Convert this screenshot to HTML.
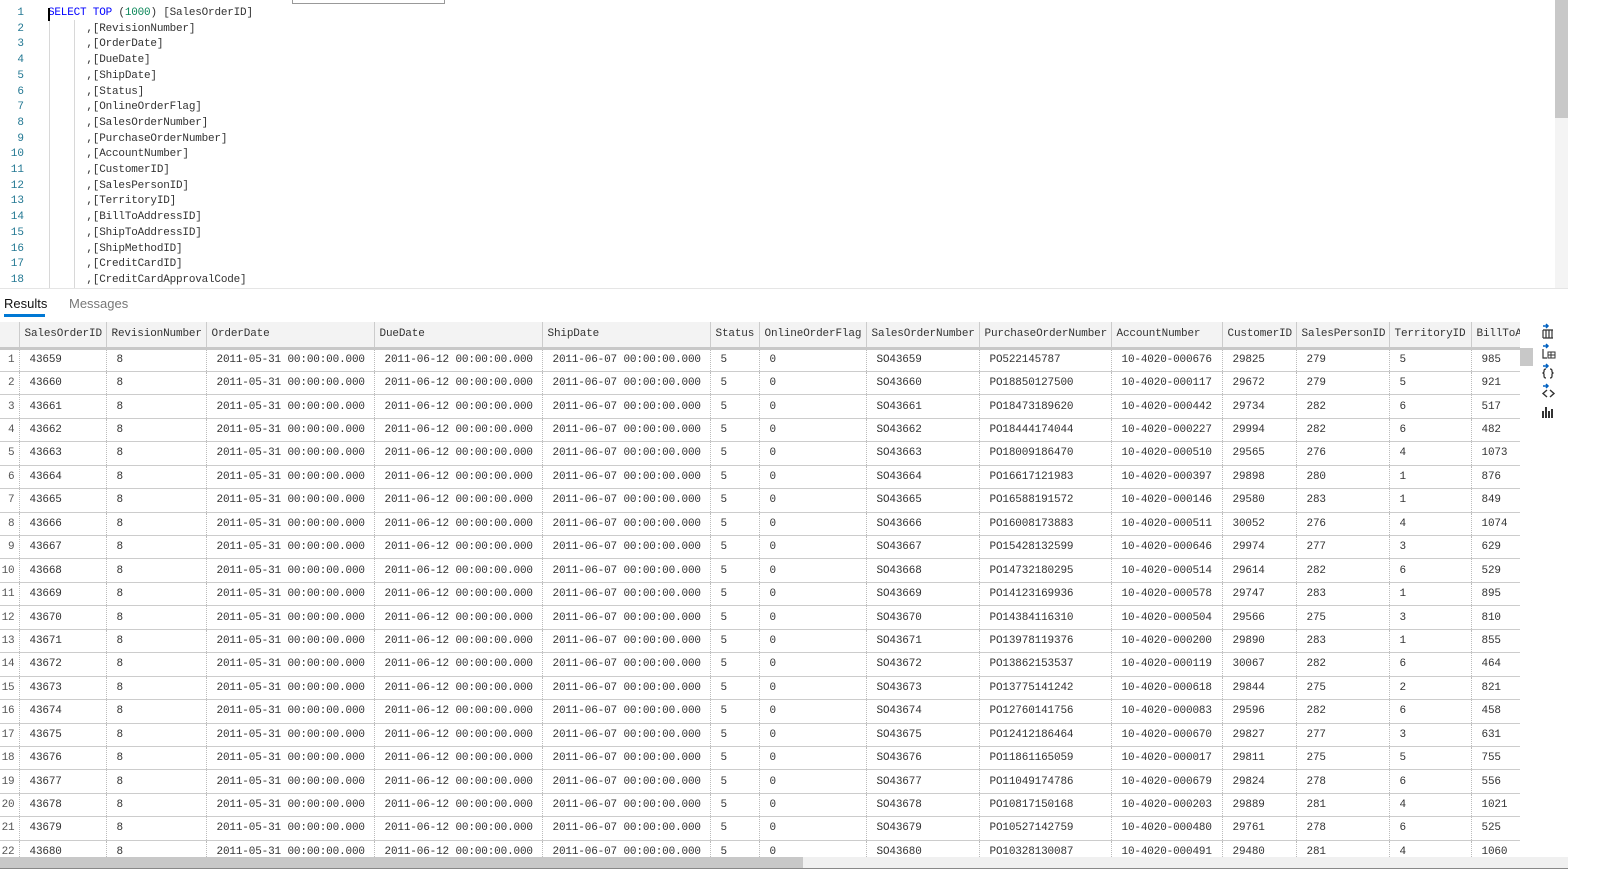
<!DOCTYPE html>
<html><head><meta charset="utf-8"><style>
*{margin:0;padding:0;box-sizing:border-box}
body{width:1602px;height:891px;background:#fff;overflow:hidden;position:relative;font-family:"Liberation Mono",monospace;}
.ed{position:absolute;left:0;top:0;width:1555px;height:288px;overflow:hidden}
.ln{position:absolute;left:0;width:24px;text-align:right;color:#237893;font-size:11px}
.cd{position:absolute;left:48px;font-size:11px;color:#333;white-space:pre;letter-spacing:-0.2px}
.kw{color:#0000ff}.nm{color:#098658}
.g1{position:absolute;left:49px;top:20px;width:1px;height:268px;background:#d8d8d8}
.g2{position:absolute;left:74px;top:20px;width:1px;height:268px;background:#d8d8d8}
.find{position:absolute;left:292px;top:-2px;width:153px;height:6px;border:1px solid #999;border-top:none;background:#fff}
.vs{position:absolute;left:1555px;top:0;width:13px;height:288px;background:#f4f4f4}
.vs i{position:absolute;left:0;top:0;width:13px;height:118px;background:#c8c8c8}
.div{position:absolute;left:0;top:288px;width:1568px;height:1px;background:#e5e5e5}
.tab{position:absolute;top:296px;font-family:"Liberation Sans",sans-serif;font-size:13px}
.ul{position:absolute;left:4px;top:314px;width:41px;height:3px;background:#0078d4}
table{position:absolute;left:0;top:0;width:1531px;border-collapse:collapse;table-layout:fixed;font-size:11px;color:#333;letter-spacing:-0.15px}
th{height:26px;background:#f3f3f3;font-weight:normal;text-align:left;padding-left:5px;border-right:1px solid #ccc;border-bottom:3px solid #c8c8c8;white-space:nowrap;overflow:hidden}
td{height:23.45px;padding-left:10px;border-right:1px dotted #bbb;border-bottom:1px solid #ccc;white-space:nowrap;overflow:hidden}
td.r{padding-left:0;text-align:right;padding-right:4px;color:#555;direction:rtl}
.tw{position:absolute;left:0;top:322px;width:1520px;height:535px;overflow:hidden}
.hs{position:absolute;left:0;top:857px;width:1568px;height:11px;background:#f0f0f0}
.hs i{position:absolute;left:0;top:0;width:803px;height:11px;background:#c8c8c8}
.bl{position:absolute;left:0;top:868px;width:1568px;height:1px;background:#888}
.rvs{position:absolute;left:1520px;top:348px;width:13px;height:18px;background:#c8c8c8}
.ico{position:absolute;left:1540px;width:16px;height:16px}
</style></head><body>
<div class="ed">
<div class="g1"></div><div class="g2"></div>
<div class="ln" style="top:7px">1</div><div class="cd" style="top:7px"><span class="kw">SELECT TOP</span> (<span class="nm">1000</span>) [SalesOrderID]</div>
<div class="ln" style="top:22.7px">2</div><div class="cd" style="top:22.7px">      ,[RevisionNumber]</div>
<div class="ln" style="top:38.4px">3</div><div class="cd" style="top:38.4px">      ,[OrderDate]</div>
<div class="ln" style="top:54.1px">4</div><div class="cd" style="top:54.1px">      ,[DueDate]</div>
<div class="ln" style="top:69.8px">5</div><div class="cd" style="top:69.8px">      ,[ShipDate]</div>
<div class="ln" style="top:85.5px">6</div><div class="cd" style="top:85.5px">      ,[Status]</div>
<div class="ln" style="top:101.2px">7</div><div class="cd" style="top:101.2px">      ,[OnlineOrderFlag]</div>
<div class="ln" style="top:116.9px">8</div><div class="cd" style="top:116.9px">      ,[SalesOrderNumber]</div>
<div class="ln" style="top:132.6px">9</div><div class="cd" style="top:132.6px">      ,[PurchaseOrderNumber]</div>
<div class="ln" style="top:148.3px">10</div><div class="cd" style="top:148.3px">      ,[AccountNumber]</div>
<div class="ln" style="top:164px">11</div><div class="cd" style="top:164px">      ,[CustomerID]</div>
<div class="ln" style="top:179.7px">12</div><div class="cd" style="top:179.7px">      ,[SalesPersonID]</div>
<div class="ln" style="top:195.4px">13</div><div class="cd" style="top:195.4px">      ,[TerritoryID]</div>
<div class="ln" style="top:211.1px">14</div><div class="cd" style="top:211.1px">      ,[BillToAddressID]</div>
<div class="ln" style="top:226.8px">15</div><div class="cd" style="top:226.8px">      ,[ShipToAddressID]</div>
<div class="ln" style="top:242.5px">16</div><div class="cd" style="top:242.5px">      ,[ShipMethodID]</div>
<div class="ln" style="top:258.2px">17</div><div class="cd" style="top:258.2px">      ,[CreditCardID]</div>
<div class="ln" style="top:273.9px">18</div><div class="cd" style="top:273.9px">      ,[CreditCardApprovalCode]</div>
<div style="position:absolute;left:48px;top:8px;width:2px;height:13px;background:#000"></div>
</div>
<div class="find"></div>
<div class="vs"><i></i></div>
<div class="div"></div>
<div class="tab" style="left:4px;color:#111">Results</div>
<div class="tab" style="left:69px;color:#777">Messages</div>
<div class="ul"></div>
<div class="tw"><table>
<colgroup><col style="width:19px"><col style="width:87px"><col style="width:100px"><col style="width:168px"><col style="width:168px"><col style="width:168px"><col style="width:49px"><col style="width:107px"><col style="width:113px"><col style="width:132px"><col style="width:111px"><col style="width:74px"><col style="width:93px"><col style="width:82px"><col style="width:60px"></colgroup>
<tr><th></th><th>SalesOrderID</th><th>RevisionNumber</th><th>OrderDate</th><th>DueDate</th><th>ShipDate</th><th>Status</th><th>OnlineOrderFlag</th><th>SalesOrderNumber</th><th>PurchaseOrderNumber</th><th>AccountNumber</th><th>CustomerID</th><th>SalesPersonID</th><th>TerritoryID</th><th>BillToAddressID</th></tr>
<tr><td class="r">1</td><td>43659</td><td>8</td><td>2011-05-31 00:00:00.000</td><td>2011-06-12 00:00:00.000</td><td>2011-06-07 00:00:00.000</td><td>5</td><td>0</td><td>SO43659</td><td>PO522145787</td><td>10-4020-000676</td><td>29825</td><td>279</td><td>5</td><td>985</td></tr>
<tr><td class="r">2</td><td>43660</td><td>8</td><td>2011-05-31 00:00:00.000</td><td>2011-06-12 00:00:00.000</td><td>2011-06-07 00:00:00.000</td><td>5</td><td>0</td><td>SO43660</td><td>PO18850127500</td><td>10-4020-000117</td><td>29672</td><td>279</td><td>5</td><td>921</td></tr>
<tr><td class="r">3</td><td>43661</td><td>8</td><td>2011-05-31 00:00:00.000</td><td>2011-06-12 00:00:00.000</td><td>2011-06-07 00:00:00.000</td><td>5</td><td>0</td><td>SO43661</td><td>PO18473189620</td><td>10-4020-000442</td><td>29734</td><td>282</td><td>6</td><td>517</td></tr>
<tr><td class="r">4</td><td>43662</td><td>8</td><td>2011-05-31 00:00:00.000</td><td>2011-06-12 00:00:00.000</td><td>2011-06-07 00:00:00.000</td><td>5</td><td>0</td><td>SO43662</td><td>PO18444174044</td><td>10-4020-000227</td><td>29994</td><td>282</td><td>6</td><td>482</td></tr>
<tr><td class="r">5</td><td>43663</td><td>8</td><td>2011-05-31 00:00:00.000</td><td>2011-06-12 00:00:00.000</td><td>2011-06-07 00:00:00.000</td><td>5</td><td>0</td><td>SO43663</td><td>PO18009186470</td><td>10-4020-000510</td><td>29565</td><td>276</td><td>4</td><td>1073</td></tr>
<tr><td class="r">6</td><td>43664</td><td>8</td><td>2011-05-31 00:00:00.000</td><td>2011-06-12 00:00:00.000</td><td>2011-06-07 00:00:00.000</td><td>5</td><td>0</td><td>SO43664</td><td>PO16617121983</td><td>10-4020-000397</td><td>29898</td><td>280</td><td>1</td><td>876</td></tr>
<tr><td class="r">7</td><td>43665</td><td>8</td><td>2011-05-31 00:00:00.000</td><td>2011-06-12 00:00:00.000</td><td>2011-06-07 00:00:00.000</td><td>5</td><td>0</td><td>SO43665</td><td>PO16588191572</td><td>10-4020-000146</td><td>29580</td><td>283</td><td>1</td><td>849</td></tr>
<tr><td class="r">8</td><td>43666</td><td>8</td><td>2011-05-31 00:00:00.000</td><td>2011-06-12 00:00:00.000</td><td>2011-06-07 00:00:00.000</td><td>5</td><td>0</td><td>SO43666</td><td>PO16008173883</td><td>10-4020-000511</td><td>30052</td><td>276</td><td>4</td><td>1074</td></tr>
<tr><td class="r">9</td><td>43667</td><td>8</td><td>2011-05-31 00:00:00.000</td><td>2011-06-12 00:00:00.000</td><td>2011-06-07 00:00:00.000</td><td>5</td><td>0</td><td>SO43667</td><td>PO15428132599</td><td>10-4020-000646</td><td>29974</td><td>277</td><td>3</td><td>629</td></tr>
<tr><td class="r">10</td><td>43668</td><td>8</td><td>2011-05-31 00:00:00.000</td><td>2011-06-12 00:00:00.000</td><td>2011-06-07 00:00:00.000</td><td>5</td><td>0</td><td>SO43668</td><td>PO14732180295</td><td>10-4020-000514</td><td>29614</td><td>282</td><td>6</td><td>529</td></tr>
<tr><td class="r">11</td><td>43669</td><td>8</td><td>2011-05-31 00:00:00.000</td><td>2011-06-12 00:00:00.000</td><td>2011-06-07 00:00:00.000</td><td>5</td><td>0</td><td>SO43669</td><td>PO14123169936</td><td>10-4020-000578</td><td>29747</td><td>283</td><td>1</td><td>895</td></tr>
<tr><td class="r">12</td><td>43670</td><td>8</td><td>2011-05-31 00:00:00.000</td><td>2011-06-12 00:00:00.000</td><td>2011-06-07 00:00:00.000</td><td>5</td><td>0</td><td>SO43670</td><td>PO14384116310</td><td>10-4020-000504</td><td>29566</td><td>275</td><td>3</td><td>810</td></tr>
<tr><td class="r">13</td><td>43671</td><td>8</td><td>2011-05-31 00:00:00.000</td><td>2011-06-12 00:00:00.000</td><td>2011-06-07 00:00:00.000</td><td>5</td><td>0</td><td>SO43671</td><td>PO13978119376</td><td>10-4020-000200</td><td>29890</td><td>283</td><td>1</td><td>855</td></tr>
<tr><td class="r">14</td><td>43672</td><td>8</td><td>2011-05-31 00:00:00.000</td><td>2011-06-12 00:00:00.000</td><td>2011-06-07 00:00:00.000</td><td>5</td><td>0</td><td>SO43672</td><td>PO13862153537</td><td>10-4020-000119</td><td>30067</td><td>282</td><td>6</td><td>464</td></tr>
<tr><td class="r">15</td><td>43673</td><td>8</td><td>2011-05-31 00:00:00.000</td><td>2011-06-12 00:00:00.000</td><td>2011-06-07 00:00:00.000</td><td>5</td><td>0</td><td>SO43673</td><td>PO13775141242</td><td>10-4020-000618</td><td>29844</td><td>275</td><td>2</td><td>821</td></tr>
<tr><td class="r">16</td><td>43674</td><td>8</td><td>2011-05-31 00:00:00.000</td><td>2011-06-12 00:00:00.000</td><td>2011-06-07 00:00:00.000</td><td>5</td><td>0</td><td>SO43674</td><td>PO12760141756</td><td>10-4020-000083</td><td>29596</td><td>282</td><td>6</td><td>458</td></tr>
<tr><td class="r">17</td><td>43675</td><td>8</td><td>2011-05-31 00:00:00.000</td><td>2011-06-12 00:00:00.000</td><td>2011-06-07 00:00:00.000</td><td>5</td><td>0</td><td>SO43675</td><td>PO12412186464</td><td>10-4020-000670</td><td>29827</td><td>277</td><td>3</td><td>631</td></tr>
<tr><td class="r">18</td><td>43676</td><td>8</td><td>2011-05-31 00:00:00.000</td><td>2011-06-12 00:00:00.000</td><td>2011-06-07 00:00:00.000</td><td>5</td><td>0</td><td>SO43676</td><td>PO11861165059</td><td>10-4020-000017</td><td>29811</td><td>275</td><td>5</td><td>755</td></tr>
<tr><td class="r">19</td><td>43677</td><td>8</td><td>2011-05-31 00:00:00.000</td><td>2011-06-12 00:00:00.000</td><td>2011-06-07 00:00:00.000</td><td>5</td><td>0</td><td>SO43677</td><td>PO11049174786</td><td>10-4020-000679</td><td>29824</td><td>278</td><td>6</td><td>556</td></tr>
<tr><td class="r">20</td><td>43678</td><td>8</td><td>2011-05-31 00:00:00.000</td><td>2011-06-12 00:00:00.000</td><td>2011-06-07 00:00:00.000</td><td>5</td><td>0</td><td>SO43678</td><td>PO10817150168</td><td>10-4020-000203</td><td>29889</td><td>281</td><td>4</td><td>1021</td></tr>
<tr><td class="r">21</td><td>43679</td><td>8</td><td>2011-05-31 00:00:00.000</td><td>2011-06-12 00:00:00.000</td><td>2011-06-07 00:00:00.000</td><td>5</td><td>0</td><td>SO43679</td><td>PO10527142759</td><td>10-4020-000480</td><td>29761</td><td>278</td><td>6</td><td>525</td></tr>
<tr><td class="r">22</td><td>43680</td><td>8</td><td>2011-05-31 00:00:00.000</td><td>2011-06-12 00:00:00.000</td><td>2011-06-07 00:00:00.000</td><td>5</td><td>0</td><td>SO43680</td><td>PO10328130087</td><td>10-4020-000491</td><td>29480</td><td>281</td><td>4</td><td>1060</td></tr>
</table></div>
<div class="rvs"></div>
<svg class="ico" style="top:323px" viewBox="0 0 16 16"><path d="M3 3h5M6 1l2 2-2 2" stroke="#0060c0" fill="none" stroke-width="1.5"/><path d="M3 7v8M6 7v8M9 7v8M12 7v8M3 15h10M3 7h10" stroke="#333" fill="none" stroke-width="1.2"/></svg>
<svg class="ico" style="top:343px" viewBox="0 0 16 16"><path d="M3 3h5M6 1l2 2-2 2" stroke="#0060c0" fill="none" stroke-width="1.5"/><path d="M3 6v9h4" stroke="#333" fill="none" stroke-width="1.2"/><rect x="8" y="9" width="7" height="6" fill="none" stroke="#333"/><path d="M8 12h7M11 9v6" stroke="#333"/></svg>
<svg class="ico" style="top:363px" viewBox="0 0 16 16"><path d="M3 3h5M6 1l2 2-2 2" stroke="#0060c0" fill="none" stroke-width="1.5"/><path d="M6 6q-2 0-2 2v1l-1 1 1 1v2q0 2 2 2M10 6q2 0 2 2v1l1 1-1 1v2q0 2-2 2" stroke="#333" fill="none" stroke-width="1.3"/></svg>
<svg class="ico" style="top:383px" viewBox="0 0 16 16"><path d="M3 3h5M6 1l2 2-2 2" stroke="#0060c0" fill="none" stroke-width="1.5"/><path d="M7 7l-4 3.5 4 3.5M10 7l4 3.5-4 3.5" stroke="#333" fill="none" stroke-width="1.4"/></svg>
<svg class="ico" style="top:403px" viewBox="0 0 16 16"><path d="M3 8v7M6 4v11M9 8v7M12 6v9" stroke="#333" stroke-width="2"/></svg>
<div class="hs"><i></i></div>
<div class="bl"></div>
</body></html>
